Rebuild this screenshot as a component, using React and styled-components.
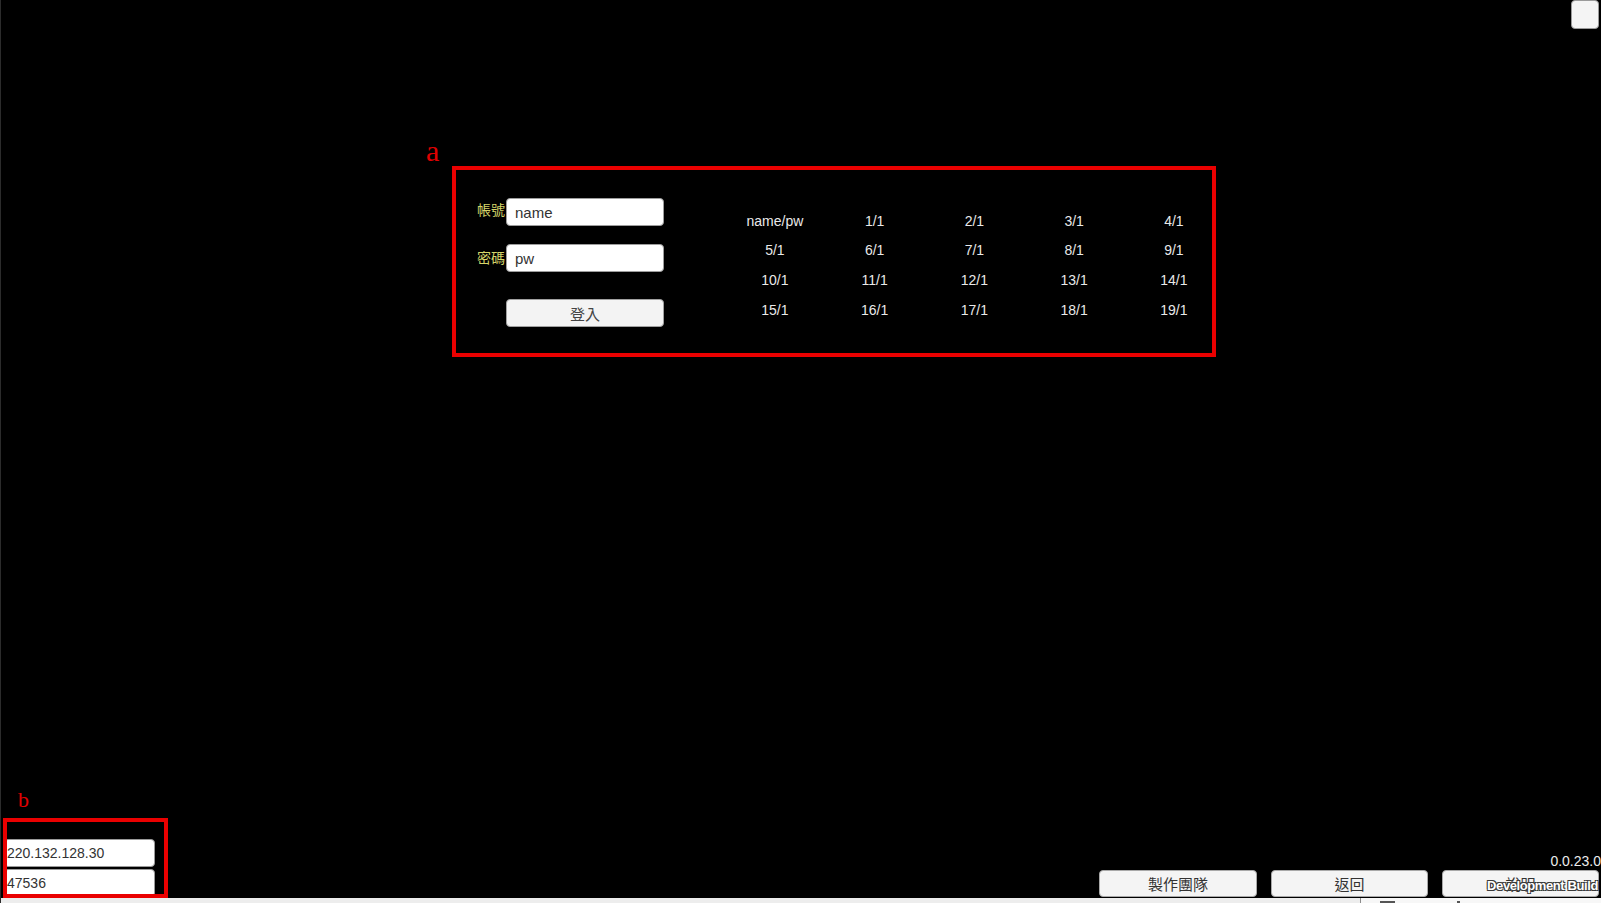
import React from "react";
import styled, { createGlobalStyle } from "styled-components";

const GlobalStyle = createGlobalStyle`
  html, body {
    margin: 0;
    padding: 0;
    background: #000;
    overflow: hidden;
  }
  #root {
    height: 100vh;
  }
  * {
    box-sizing: border-box;
  }
`;

const SANS = `"Liberation Sans", Arial, "Noto Sans CJK TC", sans-serif`;

const Screen = styled.div`
  position: relative;
  width: 100vw;
  height: 100vh;
  display: flex;
  flex-direction: column;
  background: #000;
  border-left: 1px solid #2c2c2c;
  font-family: ${SANS};
`;

const TopBar = styled.div`
  display: flex;
  justify-content: flex-end;
  padding-right: 2px;
  height: 29px;
`;

const CornerButton = styled.button`
  width: 28px;
  height: 29px;
  padding: 0;
  background: #f4f4f4;
  border: 1px solid #9a9a9a;
  border-radius: 4px;
`;

const Stage = styled.div`
  flex: 1;
`;

const PanelWrap = styled.section`
  margin-top: 112px;
  padding-left: 425px;
  display: flex;
  flex-direction: column;
  align-items: flex-start;
`;

const MarkerLabel = styled.div`
  font-family: "Liberation Serif", "Times New Roman", serif;
  font-size: ${(p) => p.$size}px;
  line-height: 20px;
  height: 20px;
  color: #e00000;
  margin-left: ${(p) => p.$offset || 0}px;
`;

const LoginBox = styled.div`
  margin-left: 26px;
  margin-top: 5px;
  width: 764px;
  height: 191px;
  border: 4px solid #ea0000;
  display: flex;
  align-items: flex-start;
  padding-left: 21px;
`;

const LoginForm = styled.div`
  display: grid;
  grid-template-columns: 29px 158px;
  grid-auto-rows: 28px;
  row-gap: 18px;
  padding-top: 28px;
`;

const FieldLabel = styled.label`
  align-self: center;
  color: #d5d56a;
  font-size: 14px;
  line-height: 16px;
  white-space: nowrap;
  font-family: "Noto Sans CJK TC", sans-serif;
  margin-top: ${(p) => p.$shift}px;
`;

const TextInput = styled.input`
  width: 158px;
  height: 28px;
  border: 1px solid #9d9d9d;
  border-radius: 4px;
  background: #fff;
  padding: 0 8px;
  font-family: ${SANS};
  font-size: 15px;
  color: #333;
  outline: none;
`;

const LoginButton = styled.button`
  grid-column: 2;
  margin-top: 9px;
  height: 28px;
  background: #f3f3f3;
  border: 1px solid #a0a0a0;
  border-radius: 4px;
  font-family: ${SANS};
  font-size: 15px;
  color: #444;
  padding: 0;
`;

const AccountGrid = styled.div`
  margin-left: 61px;
  padding-top: 36px;
  display: grid;
  grid-template-columns: repeat(5, 99.75px);
  grid-auto-rows: 29.67px;
  align-items: center;
  justify-items: center;
  color: #e9e9e9;
  font-size: 14px;
`;

const BottomRow = styled.div`
  display: flex;
  justify-content: space-between;
  align-items: flex-end;
`;

const ServerBlock = styled.div`
  margin-left: 2px;
  display: flex;
  flex-direction: column;
  align-items: flex-start;
`;

const ServerBox = styled.div`
  margin-top: 8px;
  width: 165px;
  height: 80px;
  border: 4px solid #ea0000;
  overflow: hidden;
  padding-top: 17px;
  display: flex;
  flex-direction: column;
  gap: 2px;
`;

const ServerInput = styled.input`
  flex-shrink: 0;
  margin-left: -3px;
  width: 151px;
  height: 28px;
  border: 1px solid #9a9a9a;
  border-radius: 4px;
  background: #fff;
  padding: 0 0 0 2px;
  font-family: ${SANS};
  font-size: 14px;
  color: #333;
  outline: none;
`;

const ActionArea = styled.div`
  display: flex;
  flex-direction: column;
  align-items: flex-end;
  margin-right: 2px;
  padding-bottom: 1px;
`;

const Version = styled.div`
  font-size: 14px;
  line-height: 16px;
  color: #ececec;
  margin-bottom: 1px;
  margin-right: -2px;
`;

const ButtonRow = styled.div`
  display: flex;
  gap: 14px;
`;

const ActionButton = styled.button`
  width: ${(p) => p.$w || 157}px;
  height: 27px;
  background: #f4f4f4;
  border: 1px solid #a8a8a8;
  border-radius: 4px;
  font-family: ${SANS};
  font-size: 15px;
  color: #333;
  padding: 0;
`;

const TaskStrip = styled.div`
  height: 5px;
  display: grid;
  grid-template-columns: 1359px 1fr;
  background: #ededed;
`;

const TaskTray = styled.div`
  border-left: 1px solid #8c8c8c;
  background: #f7f7f7;
  display: flex;
  align-items: flex-end;
  gap: 62px;
  padding-left: 19px;
`;

const TrayMark = styled.span`
  width: ${(p) => p.$w}px;
  height: 2px;
  background: #555;
`;

const DevBuild = styled.div`
  position: absolute;
  right: 3px;
  bottom: 11px;
  font-family: ${SANS};
  font-weight: bold;
  font-size: 13px;
  line-height: 13px;
  letter-spacing: -0.4px;
  color: #fff;
  pointer-events: none;
  text-shadow: 1px 1px 0 #3a3a3a, -1px -1px 0 #3a3a3a, 1px -1px 0 #3a3a3a,
    -1px 1px 0 #3a3a3a;
`;

const accounts = [
  "name/pw", "1/1", "2/1", "3/1", "4/1",
  "5/1", "6/1", "7/1", "8/1", "9/1",
  "10/1", "11/1", "12/1", "13/1", "14/1",
  "15/1", "16/1", "17/1", "18/1", "19/1",
];

export default function App() {
  return (
    <>
      <GlobalStyle />
      <Screen>
        <TopBar>
          <CornerButton aria-label="menu" />
        </TopBar>
        <Stage>
          <PanelWrap>
            <MarkerLabel $size={30}>a</MarkerLabel>
            <LoginBox>
              <LoginForm>
                <FieldLabel $shift={-6}>帳號</FieldLabel>
                <TextInput readOnly value="name" />
                <FieldLabel $shift={-2}>密碼</FieldLabel>
                <TextInput readOnly value="pw" />
                <LoginButton>登入</LoginButton>
              </LoginForm>
              <AccountGrid>
                {accounts.map((a) => (
                  <span key={a}>{a}</span>
                ))}
              </AccountGrid>
            </LoginBox>
          </PanelWrap>
        </Stage>
        <BottomRow>
          <ServerBlock>
            <MarkerLabel $size={22} $offset={15}>b</MarkerLabel>
            <ServerBox>
              <ServerInput readOnly value="220.132.128.30" />
              <ServerInput readOnly value="47536" />
            </ServerBox>
          </ServerBlock>
          <ActionArea>
            <Version>0.0.23.0</Version>
            <ButtonRow>
              <ActionButton $w={158}>製作團隊</ActionButton>
              <ActionButton>返回</ActionButton>
              <ActionButton>說明</ActionButton>
            </ButtonRow>
          </ActionArea>
        </BottomRow>
        <TaskStrip>
          <div />
          <TaskTray>
            <TrayMark $w={15} />
            <TrayMark $w={3} />
          </TaskTray>
        </TaskStrip>
        <DevBuild>Development Build</DevBuild>
      </Screen>
    </>
  );
}
